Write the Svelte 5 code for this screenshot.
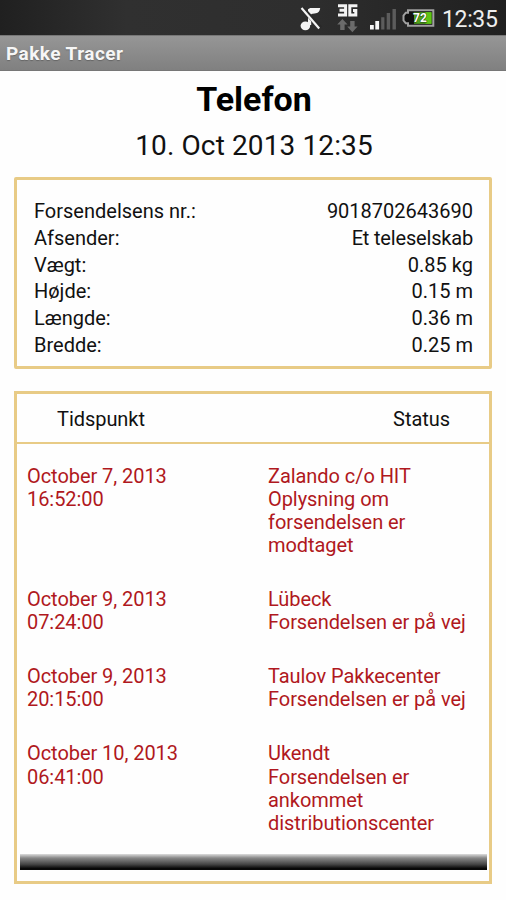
<script>
  const details = [
    ['Forsendelsens nr.:', '9018702643690'],
    ['Afsender:', 'Et teleselskab'],
    ['Vægt:', '0.85 kg'],
    ['Højde:', '0.15 m'],
    ['Længde:', '0.36 m'],
    ['Bredde:', '0.25 m']
  ];
  const events = [
    { date: 'October 7, 2013', time: '16:52:00', lines: ['Zalando c/o HIT', 'Oplysning om', 'forsendelsen er', 'modtaget'] },
    { date: 'October 9, 2013', time: '07:24:00', lines: ['Lübeck', 'Forsendelsen er på vej'] },
    { date: 'October 9, 2013', time: '20:15:00', lines: ['Taulov Pakkecenter', 'Forsendelsen er på vej'] },
    { date: 'October 10, 2013', time: '06:41:00', lines: ['Ukendt', 'Forsendelsen er', 'ankommet', 'distributionscenter'] }
  ];
</script>

<div class="screen">
  <div class="statusbar">
    <svg class="icons" width="150" height="35" viewBox="0 0 150 35">
      <g>
        <ellipse cx="15.4" cy="25.8" rx="4.8" ry="4.4" fill="#f4f4f4" />
        <path d="M18 25V9.3l2.2-1.3h10c-.5 3.4-1.9 5-4.2 5.2l-4.8.7V25z" fill="#f4f4f4" />
        <path d="M12.5 8.2 30.4 28" stroke="#292929" stroke-width="4.5" />
        <path d="M11.5 8 29.2 28.5" stroke="#f4f4f4" stroke-width="2.2" />
      </g>
      <g fill="none" stroke="#f4f4f4" stroke-width="3">
        <path d="M48 5.7h7.6v9.2H48M49.5 10.3H56" />
        <path d="M67.4 5.7h-7.6v9.2h6v-4.4h-2.8" />
      </g>
      <path d="m52.4 19 5.2 5.6h-3V30h-4.4v-5.4h-3zM62.4 32.2l5.2-5.6h-3V21h-4.4v5.6h-3z" fill="#6b6b6b" />
      <path d="M80 25h3.8v4.5H80zM85.3 21h3.8v8.5h-3.8z" fill="#f6f6f6" />
      <path d="M91.2 17.2h3.2v12.3h-3.2zM96.7 13h3.4v16.5h-3.4zM102.5 9h3.4v20.5h-3.4z" fill="#5c5c5c" />
      <path d="M118 10.2h25.3v15.6H118v-2.5h-2.2l-2.3-2.8v-5l2.3-2.8h2.2z" fill="#111" stroke="#a0a0a0" stroke-width="2" />
      <path d="M124 12.2h17.5v11.6H124z" fill="#4fa31b" />
      <path d="M135.5 12.2h6v11.6h-6z" fill="#5fc414" />
      <text x="123" y="22.4" class="charge">72</text>
    </svg>
    <span class="clock">12:35</span>
  </div>
  <div class="titlebar">Pakke Tracer</div>
  <h1>Telefon</h1>
  <div class="date">10. Oct 2013 12:35</div>

  <section class="details">
    {#each details as [label, value]}
      <div class="row"><span>{label}</span><span>{value}</span></div>
    {/each}
  </section>

  <section class="history">
    <div class="head"><span>Tidspunkt</span><span>Status</span></div>
    <div class="events">
      {#each events as event}
        <div class="event">
          <div class="when"><div>{event.date}</div><div>{event.time}</div></div>
          <div class="what">
            {#each event.lines as line}<div>{line}</div>{/each}
          </div>
        </div>
      {/each}
    </div>
    <div class="shade"></div>
  </section>
</div>

<style>
  :global(body) { margin: 0; background: #fefefe; }
  .screen {
    width: 506px;
    height: 900px;
    overflow: hidden;
    display: flex;
    flex-direction: column;
    box-sizing: border-box;
    background: #fefefe;
    color: #111;
    font-family: Roboto, "Liberation Sans", sans-serif;
    white-space: nowrap;
  }
  .statusbar {
    height: 35px;
    flex: none;
    display: flex;
    justify-content: flex-end;
    background: linear-gradient(90deg, #202020, #303030 25%, #2e2e2e 60%, #202020);
  }
  .icons { flex: none; }
  .charge { font: 700 12px Roboto, sans-serif; fill: #fff; stroke: #234a10; stroke-width: 1px; paint-order: stroke; }
  .clock { width: 66px; box-sizing: border-box; padding-left: 2px; font-size: 23px; letter-spacing: -.35px; line-height: 39px; color: #eee; }
  .titlebar {
    height: 36px;
    flex: none;
    box-sizing: border-box;
    padding-left: 6px;
    border-top: 1px solid #777;
    border-bottom: 1px solid #777;
    background: linear-gradient(#969696, #808080);
    color: #f6f6f6;
    font-size: 19px;
    font-weight: 700;
    letter-spacing: .45px;
    line-height: 35px;
    text-shadow: 0 1px 1px #666;
  }
  h1 { margin: 7px 0 0; height: 42px; text-align: center; font-size: 34px; line-height: 42px; font-weight: 700; color: #000; padding-left: 2px; }
  .date { height: 40px; margin-top: 6px; text-align: center; font-size: 28px; letter-spacing: .12px; line-height: 40px; padding-left: 2px; }
  .details {
    margin: 11px 14px 0 14px;
    height: 192px;
    box-sizing: border-box;
    border: 3px solid #e8cb86;
    border-radius: 2px;
    padding: 18px 16px 0 17px;
    font-size: 20px;
  }
  .row { display: flex; justify-content: space-between; height: 26.75px; line-height: 26.75px; }
  .row:nth-child(2) span:last-child { letter-spacing: -.18px; }
  .history {
    margin: 22px 14px 0 14px;
    height: 493px;
    box-sizing: border-box;
    border: 3px solid #e8cb86;
    display: flex;
    flex-direction: column;
    font-size: 20px;
  }
  .head { flex: none; height: 50px; box-sizing: border-box; display: flex; justify-content: space-between; padding: 0 39px 0 40px; line-height: 50px; letter-spacing: -.05px; border-bottom: 2px solid #e8cb86; }
  .events { flex: 1; padding: 20.7px 10px 0; color: #b01820; line-height: 23.1px; letter-spacing: -.06px; display: flex; flex-direction: column; gap: 31px; }
  .event { display: flex; }
  .when { width: 241px; flex: none; }
  .shade { flex: none; height: 16px; margin: 0 2px 11px 3px; background: linear-gradient(#ddd, #888 25%, #444 65%, #080808 90%); }
</style>
